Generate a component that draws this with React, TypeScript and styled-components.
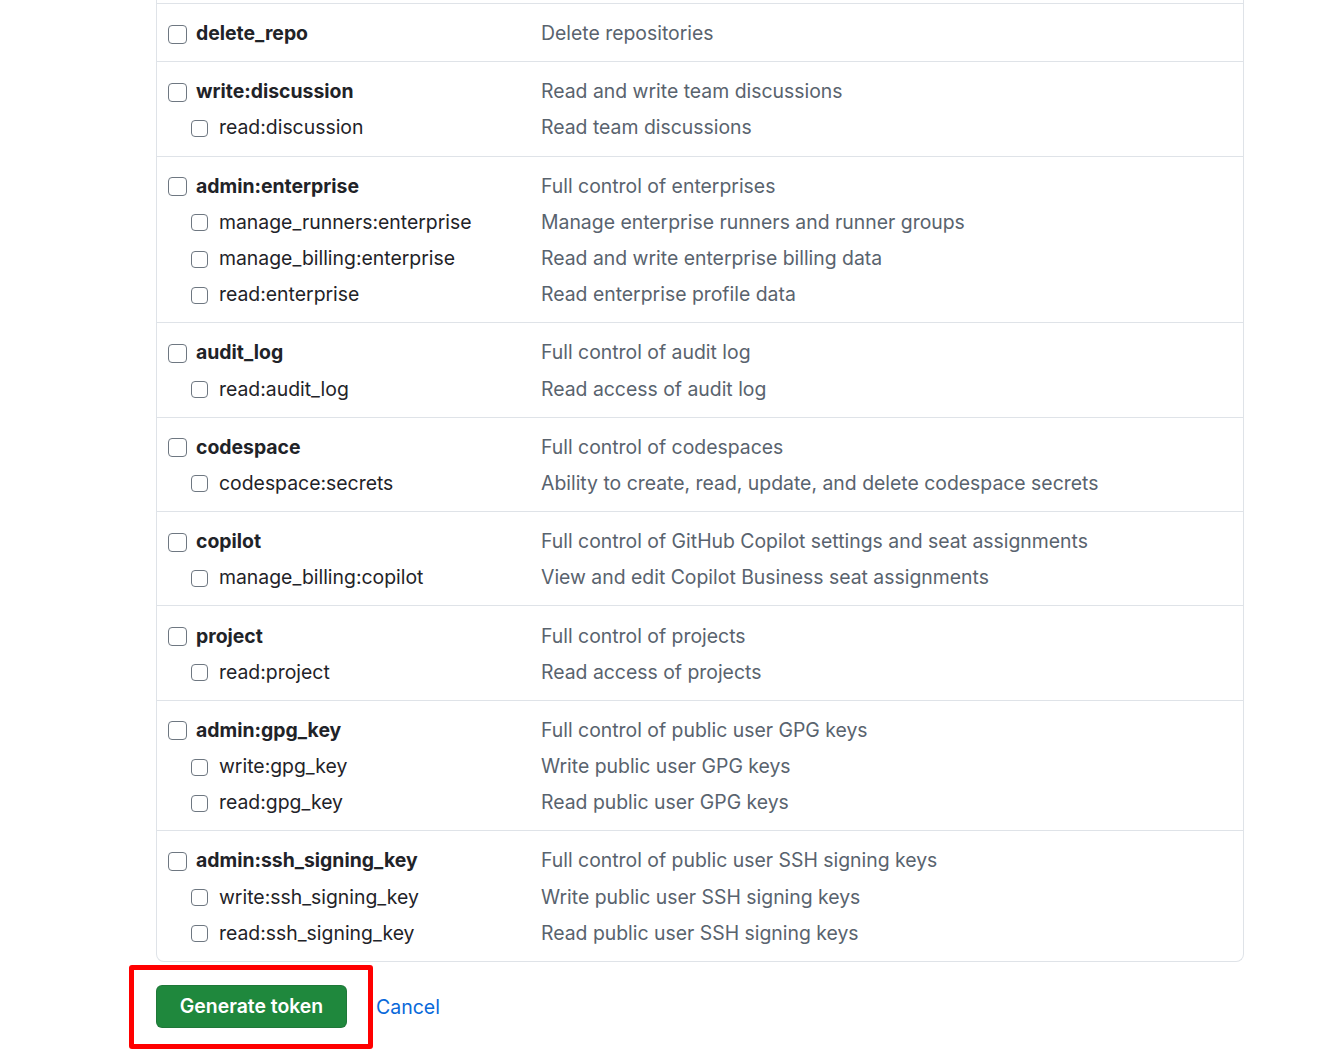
import React from 'react';
import styled, { createGlobalStyle } from 'styled-components';

const GlobalStyle = createGlobalStyle`
  html, body {
    margin: 0;
    padding: 0;
    background: #ffffff;
  }
  body {
    font-family: Inter, "Noto Sans", "Liberation Sans", sans-serif;
    color: #1f2328;
  }
`;

type Scope = { name: string; description: string };
type Group = { main: Scope; children: Scope[] };

const groups: Group[] = [
  { main: { name: 'delete_repo', description: 'Delete repositories' }, children: [] },
  {
    main: { name: 'write:discussion', description: 'Read and write team discussions' },
    children: [{ name: 'read:discussion', description: 'Read team discussions' }],
  },
  {
    main: { name: 'admin:enterprise', description: 'Full control of enterprises' },
    children: [
      { name: 'manage_runners:enterprise', description: 'Manage enterprise runners and runner groups' },
      { name: 'manage_billing:enterprise', description: 'Read and write enterprise billing data' },
      { name: 'read:enterprise', description: 'Read enterprise profile data' },
    ],
  },
  {
    main: { name: 'audit_log', description: 'Full control of audit log' },
    children: [{ name: 'read:audit_log', description: 'Read access of audit log' }],
  },
  {
    main: { name: 'codespace', description: 'Full control of codespaces' },
    children: [
      { name: 'codespace:secrets', description: 'Ability to create, read, update, and delete codespace secrets' },
    ],
  },
  {
    main: { name: 'copilot', description: 'Full control of GitHub Copilot settings and seat assignments' },
    children: [{ name: 'manage_billing:copilot', description: 'View and edit Copilot Business seat assignments' }],
  },
  {
    main: { name: 'project', description: 'Full control of projects' },
    children: [{ name: 'read:project', description: 'Read access of projects' }],
  },
  {
    main: { name: 'admin:gpg_key', description: 'Full control of public user GPG keys' },
    children: [
      { name: 'write:gpg_key', description: 'Write public user GPG keys' },
      { name: 'read:gpg_key', description: 'Read public user GPG keys' },
    ],
  },
  {
    main: { name: 'admin:ssh_signing_key', description: 'Full control of public user SSH signing keys' },
    children: [
      { name: 'write:ssh_signing_key', description: 'Write public user SSH signing keys' },
      { name: 'read:ssh_signing_key', description: 'Read public user SSH signing keys' },
    ],
  },
];

const Page = styled.div`
  padding-left: 156px;
  width: 1088px;
`;

const Panel = styled.div`
  border: 1px solid #dfe3e8;
  border-top: none;
  border-radius: 0 0 8px 8px;
`;

const PanelStub = styled.div`
  height: 3px;
`;

const ScopeGroup = styled.div`
  border-top: 1px solid #dfe3e8;
  padding: 11px 0 10px 11px;
`;

const Row = styled.div`
  display: flex;
  align-items: center;
  height: 36.19px;
  font-size: 19.4px;
`;

const LabelCell = styled.label<{ $sub?: boolean }>`
  display: flex;
  align-items: center;
  width: 373px;
  flex-shrink: 0;
  padding-left: ${(p) => (p.$sub ? '23px' : '0')};
  box-sizing: border-box;
  gap: ${(p) => (p.$sub ? '11px' : '9px')};
  font-weight: ${(p) => (p.$sub ? 400 : 700)};
  color: #1f2328;
`;

const Box = styled.span<{ $sub?: boolean }>`
  display: inline-block;
  width: ${(p) => (p.$sub ? '15px' : '17px')};
  height: ${(p) => (p.$sub ? '15px' : '17px')};
  border: 1.5px solid #6e7781;
  border-radius: 4px;
  background: #ffffff;
  flex-shrink: 0;
  margin-top: 2px;
`;

const Description = styled.span`
  color: #59636e;
`;

const Footer = styled.div`
  display: flex;
  align-items: center;
  margin-left: 129px;
  margin-top: 3px;
  gap: 3px;
`;

const Highlight = styled.div`
  border: 5px solid #ff0000;
  border-radius: 3px;
  padding: 15px 21px 16px 22px;
`;

const GenerateButton = styled.button`
  width: 191px;
  height: 43px;
  background: #1f883d;
  border: 1px solid rgba(31, 35, 40, 0.15);
  border-radius: 6px;
  color: #ffffff;
  font-family: inherit;
  font-size: 19.4px;
  font-weight: 600;
  cursor: pointer;
`;

const CancelLink = styled.a`
  color: #0969da;
  font-size: 19.5px;
  text-decoration: none;
  cursor: pointer;
`;

const ScopeRow = ({ scope, sub }: { scope: Scope; sub?: boolean }) => (
  <Row>
    <LabelCell $sub={sub}>
      <Box $sub={sub} />
      {scope.name}
    </LabelCell>
    <Description>{scope.description}</Description>
  </Row>
);

const App = (): JSX.Element => (
  <>
    <GlobalStyle />
    <Page>
      <Panel>
        <PanelStub />
        {groups.map((group) => (
          <ScopeGroup key={group.main.name}>
            <ScopeRow scope={group.main} />
            {group.children.map((child) => (
              <ScopeRow key={child.name} scope={child} sub />
            ))}
          </ScopeGroup>
        ))}
      </Panel>
    </Page>
    <Footer>
      <Highlight>
        <GenerateButton>Generate token</GenerateButton>
      </Highlight>
      <CancelLink>Cancel</CancelLink>
    </Footer>
  </>
);

export default App;
